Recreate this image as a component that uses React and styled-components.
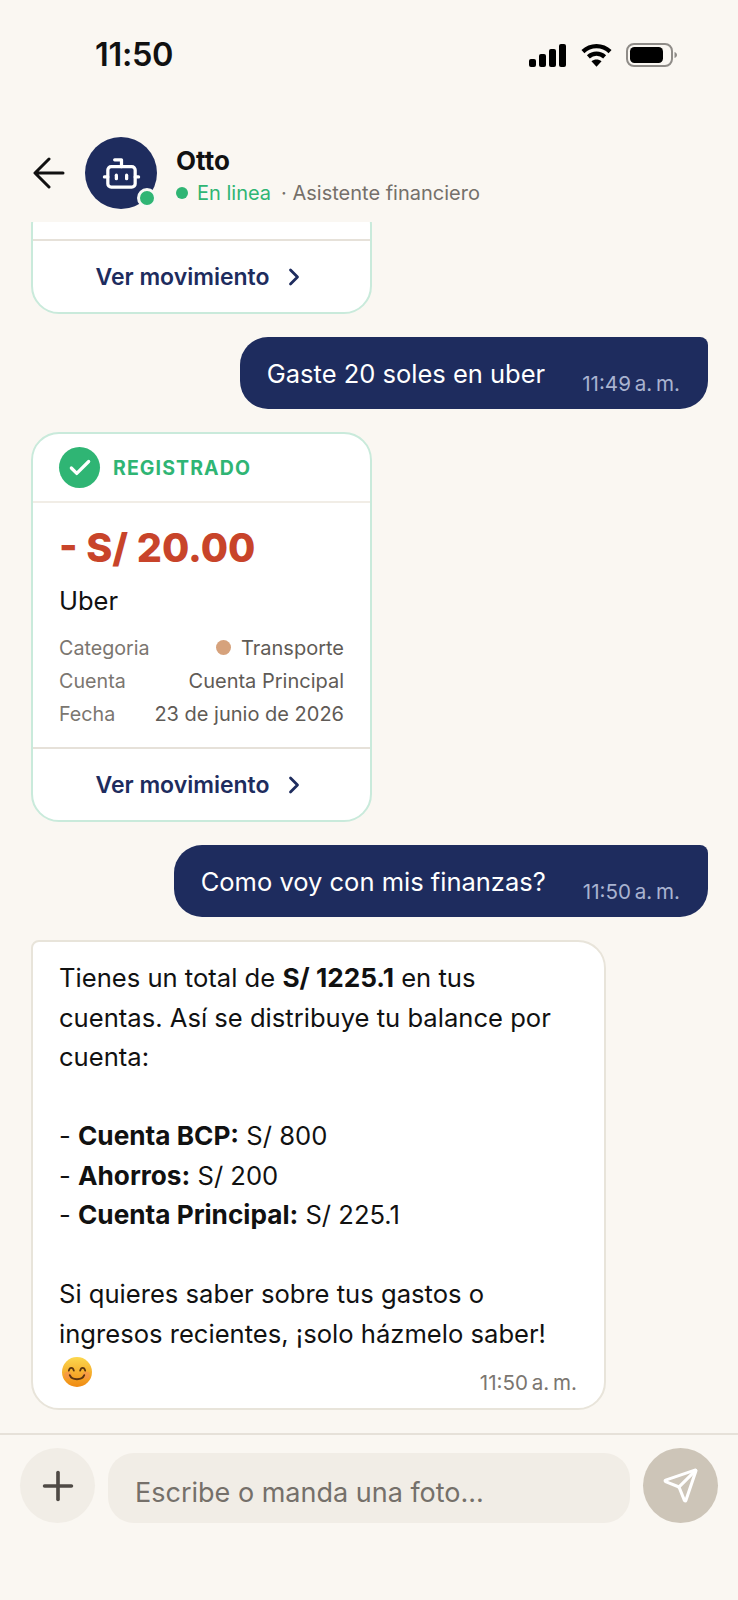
import React from 'react';
import styled, { createGlobalStyle } from 'styled-components';
import { Bot, Check, ChevronRight, Plus, Send } from 'lucide-react';

const GlobalStyle = createGlobalStyle`
  html, body {
    margin: 0;
    padding: 0;
    background: #faf7f2;
  }
  * { box-sizing: border-box; }
`;

const Page = styled.div`
  width: 738px;
  height: 1600px;
  display: flex;
  flex-direction: column;
  background: #faf7f2;
  color: #111;
  font-family: Inter, "Noto Sans", sans-serif;
  overflow: hidden;
`;

const StatusBar = styled.div`
  height: 110px;
  flex: none;
  display: flex;
  justify-content: space-between;
  padding: 36px 61px 0 95px;
`;

const Clock = styled.div`
  font-size: 32.5px;
  line-height: 38px;
  font-weight: 600;
  letter-spacing: -0.3px;
`;

const StatusIcons = styled.div`
  display: flex;
  align-items: center;
  gap: 14.5px;
  height: 38px;
`;

const Header = styled.header`
  flex: none;
  height: 112px;
  display: flex;
  align-items: flex-start;
  padding: 27px 0 0 33px;
`;

const BackButton = styled.div`
  width: 32px;
  height: 72px;
  margin-right: 20px;
  display: flex;
  align-items: center;
  justify-content: center;
`;

const Avatar = styled.div`
  position: relative;
  width: 72px;
  height: 72px;
  border-radius: 50%;
  background: #1e2c5e;
  color: #fff;
  display: flex;
  align-items: center;
  justify-content: center;
  margin-right: 19px;
`;

const OnlineDot = styled.span`
  position: absolute;
  right: 0;
  bottom: 1px;
  width: 20px;
  height: 20px;
  border-radius: 50%;
  background: #2fb574;
  border: 3px solid #f6f8f4;
`;

const HeaderText = styled.div`
  display: flex;
  flex-direction: column;
  padding-top: 9px;
`;

const Name = styled.div`
  font-size: 26px;
  line-height: 30px;
  font-weight: 700;
`;

const StatusLine = styled.div`
  display: flex;
  align-items: center;
  margin-top: 5px;
  font-size: 20px;
  line-height: 24px;
  color: #75706a;
`;

const GreenDot = styled.span`
  width: 12px;
  height: 12px;
  border-radius: 50%;
  background: #2fb574;
  margin-right: 9px;
`;

const OnlineLabel = styled.span`
  color: #2fb574;
  margin-right: 10px;
`;

const Messages = styled.main`
  flex: 1;
  min-height: 0;
  overflow: hidden;
  display: flex;
  flex-direction: column;
  justify-content: flex-end;
  gap: 23px;
  padding: 0 30px 23px 31px;
`;

const Card = styled.section`
  flex: none;
  width: 341px;
  background: #fff;
  border: 2px solid #c9eadb;
  border-radius: 28px;
  overflow: hidden;
`;

const CardRest = styled.div`
  height: 40px;
`;

const CardTop = styled.div`
  height: 69px;
  display: flex;
  align-items: center;
  gap: 13px;
  padding-left: 26px;
  border-bottom: 2px solid #f1ede6;
`;

const CheckCircle = styled.span`
  width: 41px;
  height: 41px;
  border-radius: 50%;
  background: #2fb574;
  color: #fff;
  display: flex;
  align-items: center;
  justify-content: center;
`;

const Registered = styled.span`
  font-size: 19.5px;
  font-weight: 700;
  letter-spacing: 1.1px;
  color: #2fb574;
`;

const CardBody = styled.div`
  padding: 20px 26px 17px 26px;
`;

const Amount = styled.div`
  font-size: 39.5px;
  line-height: 50px;
  font-weight: 800;
  color: #c8442a;
`;

const Merchant = styled.div`
  font-size: 25.5px;
  line-height: 30px;
  margin-top: 13px;
  margin-bottom: 15px;
`;

const DetailRow = styled.div`
  display: flex;
  justify-content: space-between;
  align-items: center;
  height: 33px;
  font-size: 20px;
  color: #5f5b56;
`;

const DetailLabel = styled.span`
  font-size: 19.7px;
  color: #7b7670;
`;

const DetailValue = styled.span`
  display: flex;
  align-items: center;
  gap: 10px;
`;

const CategoryDot = styled.span`
  width: 15px;
  height: 15px;
  border-radius: 50%;
  background: #d6a27c;
`;

const CardLink = styled.div`
  height: 73px;
  display: flex;
  align-items: center;
  justify-content: center;
  gap: 10px;
  border-top: 2px solid #e6e1d9;
  color: #1e2c5e;
  font-size: 23px;
  font-weight: 600;
`;

const UserBubble = styled.div`
  flex: none;
  align-self: flex-end;
  height: 72px;
  display: flex;
  align-items: center;
  gap: 37px;
  padding: 0 28px 0 27px;
  background: #1e2c5e;
  color: #fff;
  border-radius: 28px 8px 28px 28px;
  font-size: 25.5px;
`;

const Stamp = styled.span`
  font-size: 20.6px;
  word-spacing: -2px;
  color: ${(p) => (p.$light ? '#a9b3d0' : '#7b7670')};
  ${(p) => (p.$light ? 'margin-top: 21px;' : '')}
`;

const BotBubble = styled.div`
  flex: none;
  width: 575px;
  background: #fff;
  border: 2px solid #e8e4da;
  border-radius: 8px 28px 28px 28px;
  padding: 16px 27px 13px 26px;
  font-size: 25.6px;
  line-height: 39.5px;

  strong {
    font-size: 26.2px;
  }
`;

const BotFooter = styled.div`
  display: flex;
  justify-content: space-between;
  align-items: flex-start;
  height: 42px;
  padding-top: 4px;
  padding-left: 3px;
  line-height: 24px;
`;

const BotStamp = styled(Stamp)`
  align-self: flex-end;
`;

const Composer = styled.footer`
  flex: none;
  height: 167px;
  border-top: 2px solid #e6e1d9;
  display: flex;
  align-items: flex-start;
  padding: 13px 20px 0;
`;

const RoundButton = styled.div`
  width: 75px;
  height: 75px;
  border-radius: 50%;
  flex: none;
  display: flex;
  align-items: center;
  justify-content: center;
  background: ${(p) => (p.$send ? '#cdc5b8' : '#f1ede6')};
  color: ${(p) => (p.$send ? '#fff' : '#4f4a45')};
`;

const InputBox = styled.div`
  flex: 1;
  height: 70px;
  margin: 5px 13px 0 13px;
  border-radius: 26px;
  background: #f1ede6;
  display: flex;
  align-items: center;
  padding: 8px 0 0 27px;
  font-size: 27px;
  color: #75706a;
`;

const Signal = () => (
  <svg width="37" height="23" viewBox="0 0 37 23" fill="#000">
    <rect x="0" y="15" width="7" height="8" rx="2" />
    <rect x="10" y="10" width="7" height="13" rx="2" />
    <rect x="20" y="5" width="7" height="18" rx="2" />
    <rect x="30" y="0" width="7" height="23" rx="2" />
  </svg>
);

const Wifi = () => (
  <svg width="31" height="24" viewBox="0 0 32 24" fill="none" stroke="#000" strokeWidth="4.4">
    <path d="M2 8.5C9.8 1 22.2 1 30 8.5" />
    <path d="M7.6 14c4.8-4.4 12-4.4 16.8 0" />
    <path d="M16 24l-5.2-5.6c3-2.4 7.4-2.4 10.4 0z" fill="#000" stroke="none" />
  </svg>
);

const Battery = () => (
  <svg width="51" height="24" viewBox="0 0 51 24">
    <rect x="1" y="1" width="45" height="22" rx="7" fill="none" stroke="#8f8c88" strokeWidth="2" />
    <rect x="4" y="4" width="33" height="16" rx="4.5" fill="#000" />
    <path d="M48.5 9c1.6.6 2.5 1.6 2.5 3s-.9 2.4-2.5 3z" fill="#8f8c88" />
  </svg>
);

const BackArrow = () => (
  <svg width="32" height="32" viewBox="0 0 32 32" fill="none" stroke="#111" strokeWidth="3" strokeLinecap="round" strokeLinejoin="round">
    <path d="M30 16H3M16 2L2 16l14 14" />
  </svg>
);

const Smile = () => (
  <svg width="30" height="30" viewBox="0 0 33 33">
    <defs>
      <linearGradient id="smileFace" x1="0" y1="0" x2="0" y2="1">
        <stop offset="0" stopColor="#fcd84e" />
        <stop offset="1" stopColor="#f08a12" />
      </linearGradient>
    </defs>
    <circle cx="16.5" cy="16.5" r="16.5" fill="url(#smileFace)" />
    <circle cx="6.5" cy="20" r="4" fill="#f7895a" opacity="0.5" />
    <circle cx="26.5" cy="20" r="4" fill="#f7895a" opacity="0.5" />
    <path d="M7.5 15c1-4 4.5-4 5.5 0M20 15c1-4 4.5-4 5.5 0" fill="none" stroke="#5a3410" strokeWidth="2" strokeLinecap="round" />
    <path d="M8.5 20c2.5 6 13.5 6 16 0" fill="none" stroke="#5a3410" strokeWidth="2" strokeLinecap="round" />
  </svg>
);

const MovementLink = () => (
  <CardLink>
    Ver movimiento <ChevronRight size={28} strokeWidth={2.4} />
  </CardLink>
);

export default function App() {
  return (
    <Page>
      <GlobalStyle />
      <StatusBar>
        <Clock>11:50</Clock>
        <StatusIcons>
          <Signal />
          <Wifi />
          <Battery />
        </StatusIcons>
      </StatusBar>
      <Header>
        <BackButton>
          <BackArrow />
        </BackButton>
        <Avatar>
          <Bot size={41} strokeWidth={1.9} />
          <OnlineDot />
        </Avatar>
        <HeaderText>
          <Name>Otto</Name>
          <StatusLine>
            <GreenDot />
            <OnlineLabel>En linea</OnlineLabel>
            · Asistente financiero
          </StatusLine>
        </HeaderText>
      </Header>
      <Messages>
        <Card>
          <CardRest />
          <MovementLink />
        </Card>
        <UserBubble>
          Gaste 20 soles en uber
          <Stamp $light>11:49 a. m.</Stamp>
        </UserBubble>
        <Card>
          <CardTop>
            <CheckCircle>
              <Check size={26} strokeWidth={3} />
            </CheckCircle>
            <Registered>REGISTRADO</Registered>
          </CardTop>
          <CardBody>
            <Amount>- S/ 20.00</Amount>
            <Merchant>Uber</Merchant>
            <DetailRow>
              <DetailLabel>Categoria</DetailLabel>
              <DetailValue>
                <CategoryDot />
                Transporte
              </DetailValue>
            </DetailRow>
            <DetailRow>
              <DetailLabel>Cuenta</DetailLabel>
              <DetailValue>Cuenta Principal</DetailValue>
            </DetailRow>
            <DetailRow>
              <DetailLabel>Fecha</DetailLabel>
              <DetailValue>23 de junio de 2026</DetailValue>
            </DetailRow>
          </CardBody>
          <MovementLink />
        </Card>
        <UserBubble>
          Como voy con mis finanzas?
          <Stamp $light>11:50 a. m.</Stamp>
        </UserBubble>
        <BotBubble>
          Tienes un total de <strong>S/ 1225.1</strong> en tus cuentas. Así se distribuye tu balance por cuenta:
          <br />
          <br />
          - <strong>Cuenta BCP:</strong> S/ 800
          <br />
          - <strong>Ahorros:</strong> S/ 200
          <br />
          - <strong>Cuenta Principal:</strong> S/ 225.1
          <br />
          <br />
          Si quieres saber sobre tus gastos o ingresos recientes, ¡solo házmelo saber!
          <BotFooter>
            <Smile />
            <BotStamp>11:50 a. m.</BotStamp>
          </BotFooter>
        </BotBubble>
      </Messages>
      <Composer>
        <RoundButton>
          <Plus size={46} strokeWidth={1.9} />
        </RoundButton>
        <InputBox>Escribe o manda una foto...</InputBox>
        <RoundButton $send>
          <Send size={37} strokeWidth={2} />
        </RoundButton>
      </Composer>
    </Page>
  );
}
